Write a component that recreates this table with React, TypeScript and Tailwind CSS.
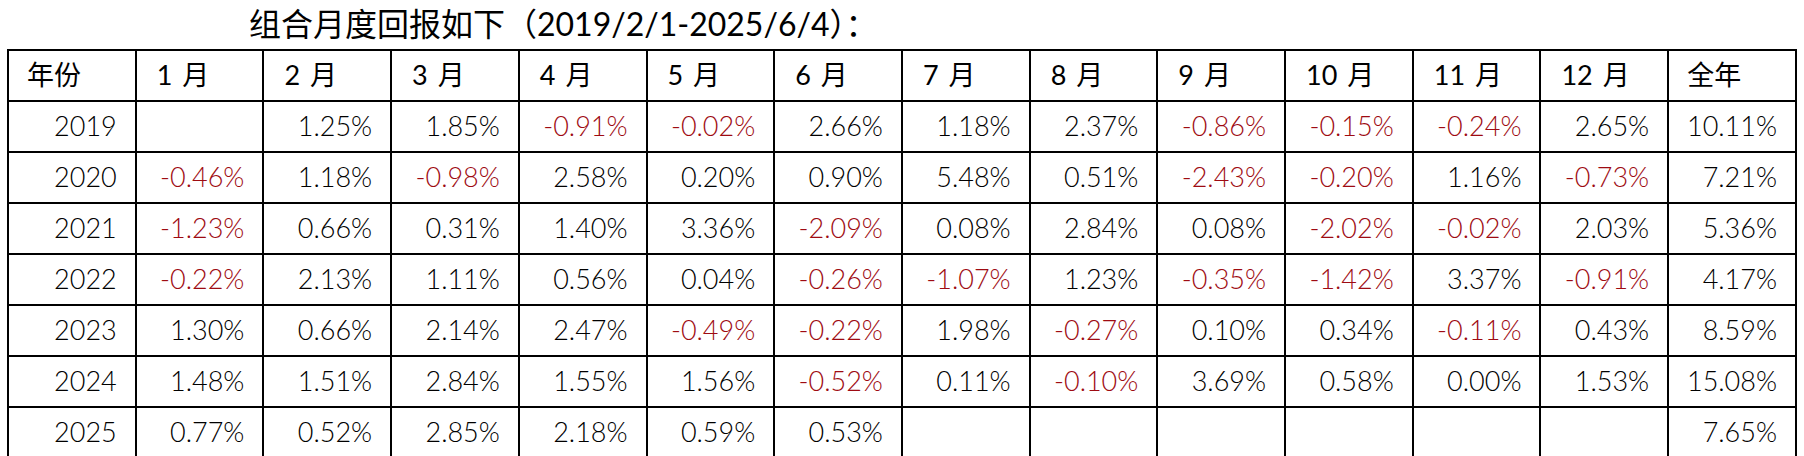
import React from "react";

const months = ["1 月", "2 月", "3 月", "4 月", "5 月", "6 月", "7 月", "8 月", "9 月", "10 月", "11 月", "12 月"];

const rows: [string, string[], string][] = [
  ["2019", ["", "1.25%", "1.85%", "-0.91%", "-0.02%", "2.66%", "1.18%", "2.37%", "-0.86%", "-0.15%", "-0.24%", "2.65%"], "10.11%"],
  ["2020", ["-0.46%", "1.18%", "-0.98%", "2.58%", "0.20%", "0.90%", "5.48%", "0.51%", "-2.43%", "-0.20%", "1.16%", "-0.73%"], "7.21%"],
  ["2021", ["-1.23%", "0.66%", "0.31%", "1.40%", "3.36%", "-2.09%", "0.08%", "2.84%", "0.08%", "-2.02%", "-0.02%", "2.03%"], "5.36%"],
  ["2022", ["-0.22%", "2.13%", "1.11%", "0.56%", "0.04%", "-0.26%", "-1.07%", "1.23%", "-0.35%", "-1.42%", "3.37%", "-0.91%"], "4.17%"],
  ["2023", ["1.30%", "0.66%", "2.14%", "2.47%", "-0.49%", "-0.22%", "1.98%", "-0.27%", "0.10%", "0.34%", "-0.11%", "0.43%"], "8.59%"],
  ["2024", ["1.48%", "1.51%", "2.84%", "1.55%", "1.56%", "-0.52%", "0.11%", "-0.10%", "3.69%", "0.58%", "0.00%", "1.53%"], "15.08%"],
  ["2025", ["0.77%", "0.52%", "2.85%", "2.18%", "0.59%", "0.53%", "", "", "", "", "", ""], "7.65%"],
];

const font = { fontFamily: 'Lato, "Noto Sans CJK SC", sans-serif' };

function Cell({ value }: { value: string }) {
  const neg = value.startsWith("-");
  return (
    <td className={`border-2 border-black h-[51px] pr-[18px] text-right ${neg ? "text-[#9e0b12]" : "text-black"}`}>
      {value}
    </td>
  );
}

export default function App() {
  return (
    <div className="bg-white w-[1804px] h-[456px] overflow-hidden text-black font-light" style={font}>
      <div className="h-[49px] pl-[249px] pt-[4px] text-[32px] leading-[40px] font-normal">
        组合月度回报如下（2019/2/1-2025/6/4）：
      </div>
      <div className="pl-[7px]">
        <table className="w-[1790px] table-fixed border-collapse text-[27px]">
          <thead>
            <tr>
              <th className="border-2 border-black h-[51px] pl-[18px] text-left font-normal">年份</th>
              {months.map((m) => (
                <th key={m} className="border-2 border-black h-[51px] pl-[20px] text-left font-normal [word-spacing:3px]">
                  {m}
                </th>
              ))}
              <th className="border-2 border-black h-[51px] pl-[18px] text-left font-normal">全年</th>
            </tr>
          </thead>
          <tbody>
            {rows.map(([year, vals, total]) => (
              <tr key={year}>
                <td className="border-2 border-black h-[51px] pr-[18px] text-right">{year}</td>
                {vals.map((v, i) => (
                  <Cell key={i} value={v} />
                ))}
                <Cell value={total} />
              </tr>
            ))}
          </tbody>
        </table>
      </div>
    </div>
  );
}
